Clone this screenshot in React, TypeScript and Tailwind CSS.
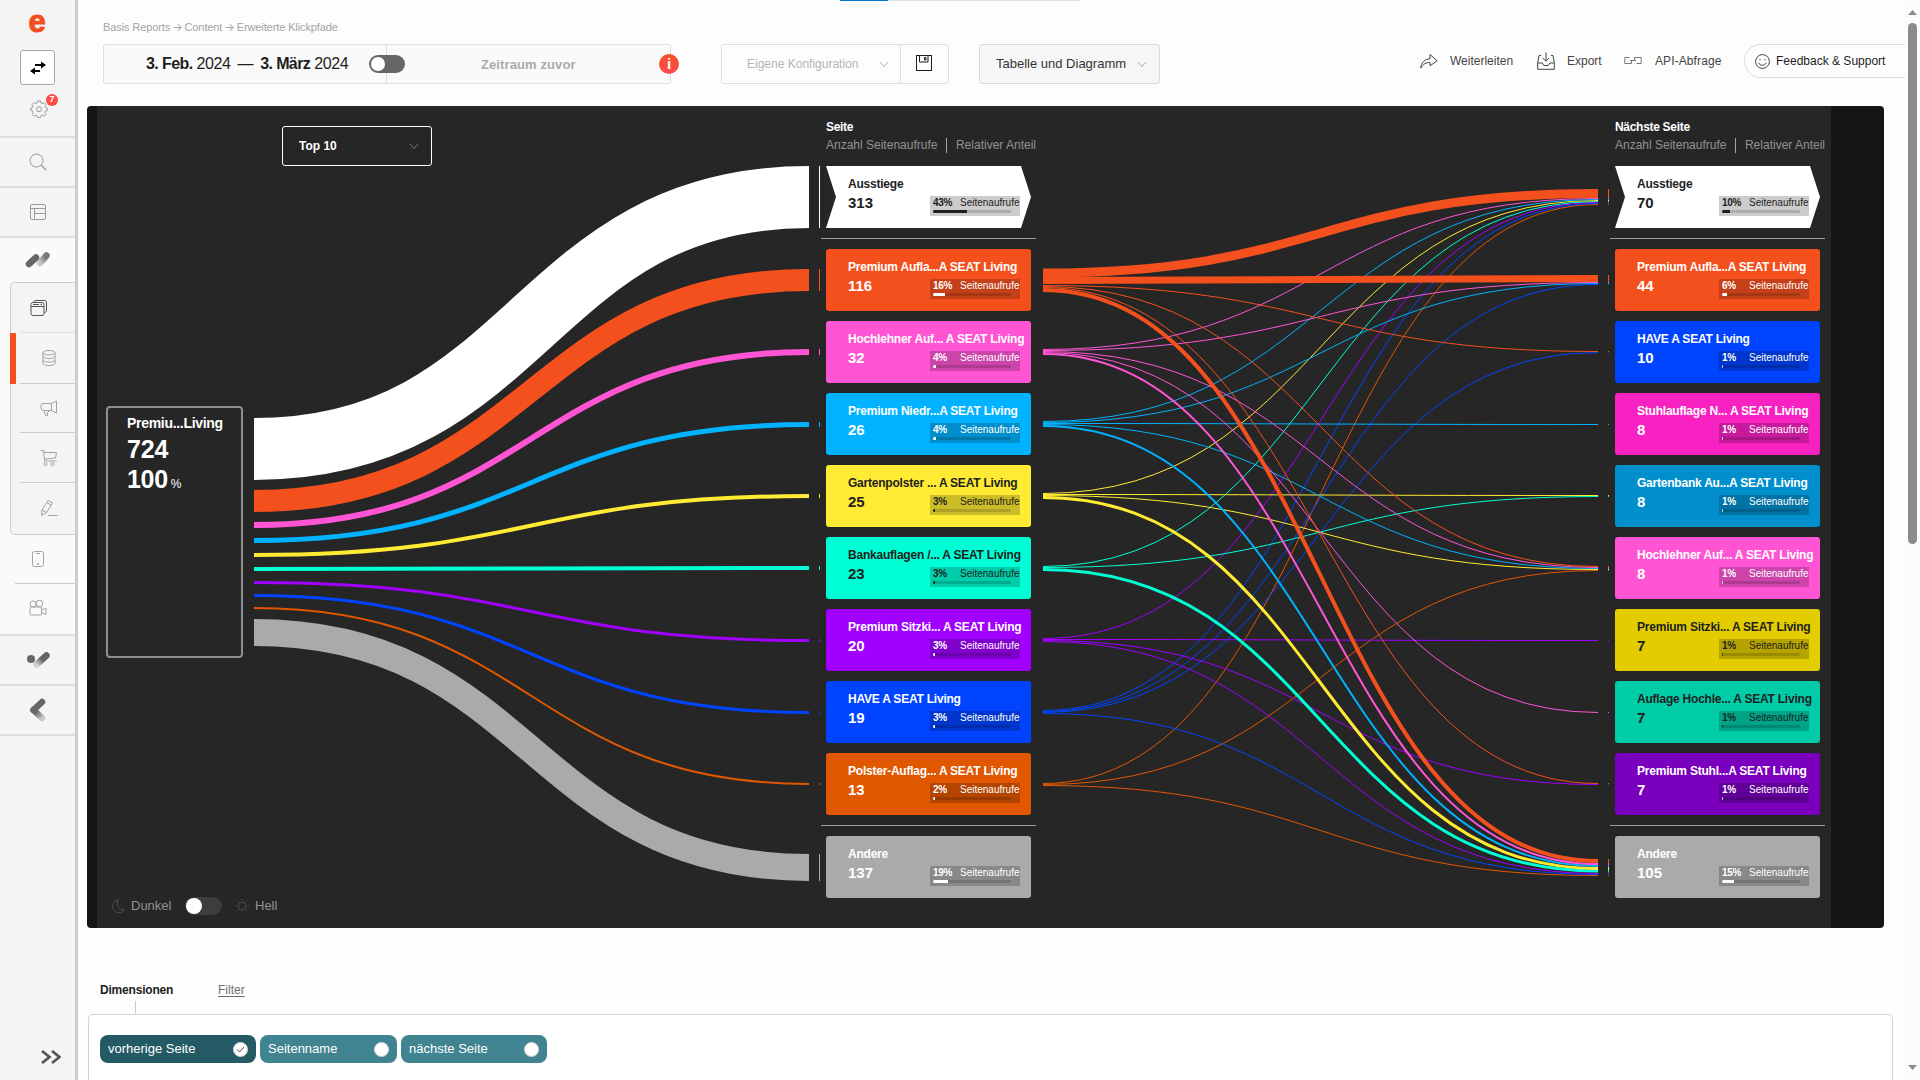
import { clsx } from "clsx";
import type { ReactNode } from "react";

type PageNode = {
    label: string;
    count: number;
    percent: number;
    card: string;
    darkText?: boolean;
};

type Link = {
    from: number;
    to: number;
    width: number;
    color: string;
};

const WHITE = "#ffffff";
const ORANGE = "#f4501e";
const PINK = "#ff55d5";
const SKY = "#00b2ff";
const YELLOW = "#ffeb33";
const MINT = "#00ffd4";
const PURPLE = "#a100ff";
const BLUE = "#0044ff";
const RUST = "#e05700";
const GRAY = "#aaaaaa";

const currentPages: PageNode[] = [
    { label: "Ausstiege", count: 313, percent: 43, card: "bg-white", darkText: true },
    { label: "Premium Aufla...A SEAT Living", count: 116, percent: 16, card: "bg-[#f4501e]" },
    { label: "Hochlehner Auf... A SEAT Living", count: 32, percent: 4, card: "bg-[#ff55d5]" },
    { label: "Premium Niedr...A SEAT Living", count: 26, percent: 4, card: "bg-[#00b2ff]" },
    { label: "Gartenpolster ... A SEAT Living", count: 25, percent: 3, card: "bg-[#ffeb33]", darkText: true },
    { label: "Bankauflagen /... A SEAT Living", count: 23, percent: 3, card: "bg-[#00ffd4]", darkText: true },
    { label: "Premium Sitzki... A SEAT Living", count: 20, percent: 3, card: "bg-[#a100ff]" },
    { label: "HAVE A SEAT Living", count: 19, percent: 3, card: "bg-[#0044ff]" },
    { label: "Polster-Auflag... A SEAT Living", count: 13, percent: 2, card: "bg-[#e05700]" },
    { label: "Andere", count: 137, percent: 19, card: "bg-[#aaaaaa]" },
];

const nextPages: PageNode[] = [
    { label: "Ausstiege", count: 70, percent: 10, card: "bg-white", darkText: true },
    { label: "Premium Aufla...A SEAT Living", count: 44, percent: 6, card: "bg-[#f4501e]" },
    { label: "HAVE A SEAT Living", count: 10, percent: 1, card: "bg-[#0044ff]" },
    { label: "Stuhlauflage N... A SEAT Living", count: 8, percent: 1, card: "bg-[#f822c3]" },
    { label: "Gartenbank Au...A SEAT Living", count: 8, percent: 1, card: "bg-[#008fcc]" },
    { label: "Hochlehner Auf... A SEAT Living", count: 8, percent: 1, card: "bg-[#ff55d5]" },
    { label: "Premium Sitzki... A SEAT Living", count: 7, percent: 1, card: "bg-[#e3cd00]", darkText: true },
    { label: "Auflage Hochle... A SEAT Living", count: 7, percent: 1, card: "bg-[#00cca8]", darkText: true },
    { label: "Premium Stuhl...A SEAT Living", count: 7, percent: 1, card: "bg-[#7a00bd]" },
    { label: "Andere", count: 105, percent: 15, card: "bg-[#aaaaaa]" },
];

// y centers of the flows at both ends
const firstLinks: Link[] = [
    { from: 449, to: 197, width: 62, color: WHITE },
    { from: 501, to: 280, width: 22, color: ORANGE },
    { from: 525, to: 352, width: 6, color: PINK },
    { from: 540.5, to: 424.5, width: 5, color: SKY },
    { from: 555, to: 496, width: 4, color: YELLOW },
    { from: 569, to: 568, width: 4, color: MINT },
    { from: 582.5, to: 640.5, width: 3, color: PURPLE },
    { from: 595.5, to: 712.5, width: 3, color: BLUE },
    { from: 608, to: 784, width: 2, color: RUST },
    { from: 632.5, to: 867.5, width: 27, color: GRAY },
];

const secondLinks: Link[] = [
    { from: 783.5, to: 204.5, width: 1, color: RUST },
    { from: 784.5, to: 570.5, width: 1, color: RUST },
    { from: 785.5, to: 875.5, width: 1, color: RUST },
    { from: 710.5, to: 203.5, width: 1, color: BLUE },
    { from: 711.5, to: 284.5, width: 1, color: BLUE },
    { from: 712.5, to: 352.5, width: 1, color: BLUE },
    { from: 713.5, to: 874.5, width: 1, color: BLUE },
    { from: 638.5, to: 202.5, width: 1, color: PURPLE },
    { from: 639.5, to: 640.5, width: 1, color: PURPLE },
    { from: 640.5, to: 784.5, width: 1, color: PURPLE },
    { from: 641.5, to: 873.5, width: 1, color: PURPLE },
    { from: 566.5, to: 201.5, width: 1, color: MINT },
    { from: 567.5, to: 496.5, width: 1, color: MINT },
    { from: 493.5, to: 200.5, width: 1, color: YELLOW },
    { from: 494.5, to: 495.5, width: 1, color: YELLOW },
    { from: 495.5, to: 569.5, width: 1, color: YELLOW },
    { from: 421.5, to: 199.5, width: 1, color: SKY },
    { from: 422.5, to: 283.5, width: 1, color: SKY },
    { from: 423.5, to: 424.5, width: 1, color: SKY },
    { from: 424.5, to: 568.5, width: 1, color: SKY },
    { from: 349.5, to: 198.5, width: 1, color: PINK },
    { from: 350.5, to: 282.5, width: 1, color: PINK },
    { from: 351.5, to: 567.5, width: 1, color: PINK },
    { from: 352.5, to: 712.5, width: 1, color: PINK },
    { from: 285.5, to: 351.5, width: 1, color: ORANGE },
    { from: 286.5, to: 566.5, width: 1, color: ORANGE },
    { from: 287.5, to: 783.5, width: 1, color: ORANGE },
    { from: 569.5, to: 871, width: 3, color: MINT },
    { from: 497.5, to: 868.5, width: 3, color: YELLOW },
    { from: 426, to: 866, width: 2, color: SKY },
    { from: 354, to: 864, width: 2, color: PINK },
    { from: 290, to: 861, width: 4, color: ORANGE },
    { from: 280.5, to: 278.5, width: 7, color: ORANGE },
    { from: 273, to: 193.5, width: 9, color: ORANGE },
];

const Flow = ({ links }: { links: Link[] }) => (
    <svg className="mr-px h-[822px] w-[566px] shrink-0" viewBox="0 106 566 822" fill="none">
        {links.map((link, index) => (
            <path
                key={index}
                d={`M0 ${link.from}C277.5 ${link.from} 277.5 ${link.to} 555 ${link.to}`}
                stroke={link.color}
                strokeWidth={link.width}
            />
        ))}
        {links.map((link, index) => (
            <rect key={index} x={565} y={link.to - link.width / 2} width={1} height={link.width} fill={link.color} />
        ))}
    </svg>
);

const PageCard = ({ page, exit }: { page: PageNode; exit?: boolean }) => (
    <div
        className={clsx(
            "mx-[5px] flex h-[62px] shrink-0 pl-[22px]",
            page.card,
            page.darkText ? "text-[#1e1e1e]" : "text-white",
            exit ? "[clip-path:polygon(0_0,195px_0,100%_50%,195px_100%,0_100%,10px_50%)]" : "rounded-[3px]"
        )}
    >
        <div className="w-[82px] pt-[10px] font-bold">
            <p className="text-xs leading-4 tracking-[-0.220px] whitespace-nowrap">{page.label}</p>
            <p className="mt-[3px] text-[15px] leading-4">{page.count}</p>
        </div>
        <div className="mt-[30px] h-5 w-[90px] bg-black/20 pl-[3px]">
            <div className="flex h-[14px] items-center text-[10px] leading-none whitespace-nowrap">
                <b className="w-[27px] tracking-[-0.3px]">{page.percent}%</b>
                <span>Seitenaufrufe</span>
            </div>
            <div className="h-[3px] w-[78px] overflow-hidden rounded-full bg-black/15">
                <div className="h-full bg-current" style={{ width: `${page.percent}%` }} />
            </div>
        </div>
    </div>
);

const PageColumn = ({ title, pages }: { title: string; pages: PageNode[] }) => (
    <div className="flex w-[215px] shrink-0 flex-col pt-[13px]">
        <div className="h-[47px] pl-[5px]">
            <p className="text-xs leading-4 font-bold tracking-[-0.3px] text-white">{title}</p>
            <p className="mt-[2px] flex items-center text-xs leading-4 whitespace-nowrap text-[#929292]">
                Anzahl Seitenaufrufe
                <span className="mr-[9px] ml-[9px] h-[15px] w-px bg-[#a5a5a5]" />
                Relativer Anteil
            </p>
        </div>
        <PageCard page={pages[0]} exit />
        <div className="my-[10px] h-px bg-[#9b9b9b]" />
        <div className="flex flex-col gap-[10px]">
            {pages.slice(1, -1).map((page) => (
                <PageCard key={page.label} page={page} />
            ))}
        </div>
        <div className="my-[10px] h-px bg-[#9b9b9b]" />
        <PageCard page={pages[pages.length - 1]} />
    </div>
);

const Icon = ({ children, size = 18, className }: { children: ReactNode; size?: number; className?: string }) => (
    <svg
        width={size}
        height={size}
        viewBox="0 0 18 18"
        fill="none"
        stroke="currentColor"
        strokeWidth="1"
        className={clsx("shrink-0", className)}
    >
        {children}
    </svg>
);

const ChevronSmall = ({ className }: { className?: string }) => (
    <svg width="10" height="7" viewBox="0 0 10 7" fill="none" stroke="currentColor" className={clsx("shrink-0", className)}>
        <path d="M1 1l4 4.5L9 1" />
    </svg>
);

const SubItem = ({ children, className }: { children: ReactNode; className?: string }) => (
    <div className={clsx("ml-[9px] flex h-[50px] items-center justify-center pl-[3px] text-[#a3a3a3]", className)}>{children}</div>
);

const Sidebar = () => (
    <aside className="flex h-[1080px] w-[78px] shrink-0 flex-col border-r-[3px] border-[#cccccc] bg-[#f4f4f4] text-[#9c9c9c]">
        <div className="flex h-[138px] flex-col items-center border-b-2 border-[#dddddd]">
            <span className="mt-[2px] h-[42px] pr-px text-[31px] leading-[40px] font-bold text-[#f4501e] [-webkit-text-stroke:1px_#f4501e]">e</span>
            <div className="mt-[6px] flex h-[35px] w-[35px] items-center justify-center rounded-[3px] border border-[#a8a8a8] bg-white">
                <svg width="18" height="14" viewBox="0 0 18 14" fill="none" stroke="#000000" strokeWidth="1.8">
                    <path d="M6 4h9M3 10h8" />
                    <path d="M12 0.500L17 4l-5 3.500zM6 6.500L1 10l5 3.500z" fill="#000000" stroke="none" />
                </svg>
            </div>
            <div className="relative mt-[15px] ml-[3px] h-[18px] w-[18px]">
                <Icon>
                    <path
                        d="M7.500 1h3l.4 2 1.300.6 1.800-1.100 2 2-1.100 1.800.6 1.300 1.800.4v2.500l-1.800.5-.6 1.400 1.100 1.800-2 2-1.800-1.100-1.300.6-.4 1.800h-3l-.4-1.800-1.300-.6-1.800 1.100-2-2 1.100-1.800L2.500 11 .700 10.500V8l1.800-.4.6-1.300L2 4.500l2-2 1.800 1.100L7.100 3z"
                        strokeLinejoin="round"
                    />
                    <circle cx="9" cy="9.200" r="2.500" />
                </Icon>
                <span className="absolute -top-[6px] left-[16px] flex h-3 w-3 items-center justify-center rounded-full bg-[#ff4b46] text-[9px] font-bold text-white">
                    7
                </span>
            </div>
        </div>
        <div className="flex h-[50px] items-center justify-center border-b-2 border-[#dddddd]">
            <Icon>
                <circle cx="7.500" cy="7.500" r="6.500" />
                <path d="M12.300 12.300l5 5" strokeWidth="1.400" />
            </Icon>
        </div>
        <div className="flex h-[50px] items-center justify-center border-b-2 border-[#dddddd]">
            <Icon>
                <rect x="1.500" y="1.500" width="15" height="15" rx="1.500" />
                <path d="M1.500 5.500h15M5.500 5.500v11M5.500 10.500h11" />
            </Icon>
        </div>
        <div className="h-[398px] border-b-2 border-[#dddddd] bg-[#fafafa]">
            <div className="flex h-11 items-center justify-center pb-[2px]">
                <svg width="25" height="17" viewBox="0 0 25 17" fill="none" strokeLinecap="round" strokeWidth="6.500">
                    <defs>
                        <linearGradient id="fadePill" x1="1" y1="0" x2="0" y2="1">
                            <stop offset="0.200" stopColor="#7a7a7a" />
                            <stop offset="1" stopColor="#cccccc" />
                        </linearGradient>
                    </defs>
                    <path d="M15 12l6.500-7.500" stroke="url(#fadePill)" />
                    <path d="M4 13l7-6.500" stroke="#666666" />
                </svg>
            </div>
            <div className="ml-[10px] h-[253px] rounded-l-[5px] border border-r-0 border-[#cccccc] bg-[#f4f4f4]">
                <div className="ml-[9px] flex h-[50px] items-center border-b border-dotted border-[#cccccc] pl-[10px] text-[#555555]">
                    <Icon>
                        <rect x="1" y="3.500" width="13" height="13" rx="2" />
                        <path d="M1 7.500h13M3 5.500h6M10.500 5.500h1.500M4 3.500c0-1.500.5-2 2-2h8c2 0 2.500.5 2.500 2.500v7c0 1.500-.5 2.500-2 2.500" />
                    </Icon>
                </div>
                <div className="flex">
                    <div className="-ml-px h-[51px] w-[6px] shrink-0 rounded-r-[1px] bg-[#f4501e]" />
                    <div className="ml-1 flex h-[51px] flex-1 items-center justify-center border-b border-[#cccccc] pl-[3px] text-[#a3a3a3]">
                        <Icon>
                            <ellipse cx="9" cy="3.700" rx="6" ry="2.200" />
                            <path d="M3 3.700v10.600c0 1.300 2.700 2.200 6 2.200s6-.9 6-2.200V3.700M3 7.300c0 1.300 2.700 2.200 6 2.200s6-.9 6-2.200M3 10.900c0 1.300 2.700 2.200 6 2.200s6-.9 6-2.200" />
                        </Icon>
                    </div>
                </div>
                <SubItem className="-mt-px border-b border-[#cccccc]">
                    <Icon>
                        <path d="M4 4.500h7.500v7H4A3.300 3.300 0 0 1 .700 8 3.300 3.300 0 0 1 4 4.500zM11.500 4.500l5-2.500v12l-5-2.500M4 11.500l1.500 5h2v-3l1-.5v-1.500" strokeLinejoin="round" />
                    </Icon>
                </SubItem>
                <SubItem className="border-b border-[#cccccc]">
                    <Icon>
                        <path d="M.5 1.500h3l1 10.500h12M4 3.500h12.500l-1 5.500-11 1" />
                        <circle cx="5.500" cy="15" r="1.600" />
                        <circle cx="12.500" cy="15" r="1.600" />
                    </Icon>
                </SubItem>
                <SubItem>
                    <Icon>
                        <path d="M8 1.500l4.500 2.500-6 9.500L1.500 16.500 2 11zM6.700 3.600l4.500 2.500M2 11l4.500 2.500M8 16.500h9.500" strokeLinejoin="round" />
                    </Icon>
                </SubItem>
            </div>
            <div className="-mt-px ml-[15px] flex h-[50px] items-center justify-center border-b border-[#cccccc] pr-[15px] text-[#a3a3a3]">
                <Icon>
                    <rect x="3.500" y="1.500" width="11" height="15" rx="2" />
                    <path d="M7 3.500h4" />
                    <circle cx="9" cy="14" r="0.700" />
                </Icon>
            </div>
            <div className="flex h-[47px] items-center justify-center text-[#a3a3a3]">
                <Icon>
                    <rect x="1" y="8" width="11.500" height="8" rx="1" />
                    <circle cx="4" cy="5" r="3" />
                    <circle cx="10.500" cy="4.500" r="3.300" />
                    <path d="M12.500 11.500l4.500-2.500v6.500l-4.500-2" />
                </Icon>
            </div>
        </div>
        <div className="flex h-[50px] items-center justify-center border-b-2 border-[#dddddd]">
            <svg width="24" height="18" viewBox="0 0 24 18" fill="none" strokeLinecap="round" strokeWidth="6.500">
                <circle cx="5" cy="8" r="4" fill="#666666" />
                <path d="M10.500 13.500l10-9" stroke="url(#fadeCheck)" />
                <defs>
                    <linearGradient id="fadeCheck" x1="1" y1="0" x2="0" y2="1">
                        <stop offset="0.450" stopColor="#666666" />
                        <stop offset="1" stopColor="#d2d2d2" />
                    </linearGradient>
                </defs>
            </svg>
        </div>
        <div className="flex h-[50px] items-center justify-center border-b-2 border-[#dddddd]">
            <svg width="17" height="24" viewBox="0 0 17 24" fill="none" strokeLinecap="round" strokeWidth="6.500">
                <defs>
                    <linearGradient id="fadeDown" x1="0" y1="0" x2="1" y2="1">
                        <stop offset="0.300" stopColor="#666666" />
                        <stop offset="1" stopColor="#c8c8c8" />
                    </linearGradient>
                </defs>
                <path d="M4.500 12l8.500 8" stroke="url(#fadeDown)" />
                <path d="M13 4L4.500 12" stroke="#666666" />
            </svg>
        </div>
        <div className="mt-auto flex justify-end pr-[14px] pb-[15px] text-[#555555]">
            <svg width="20" height="16" viewBox="0 0 20 16" fill="none" stroke="currentColor" strokeWidth="2.800">
                <path d="M1 2L8.500 8 1 14M11 2L18.500 8 11 14" />
            </svg>
        </div>
    </aside>
);

const Toolbar = () => (
    <div className="flex h-10 items-start">
        <div className="ml-[25px] flex h-10 w-[568px] shrink-0 items-center rounded-[3px] border border-[#dedede] bg-[#fafafa]">
            <div className="relative flex h-full w-[283px] shrink-0 items-center border-r border-[#dedede] pl-[42px] text-[16px] tracking-[-0.4px] whitespace-pre text-[#1e1e1e]">
                <b className="tracking-[-0.600px]">3. Feb.</b> 2024
                <span className="mx-[7px]">—</span>
                <b className="tracking-[-0.600px]">3. März</b> 2024
                <span className="absolute top-[10px] left-[265px] h-[18px] w-9 rounded-full bg-[#666666] p-[2px]">
                    <span className="block h-[14px] w-[14px] rounded-full bg-white" />
                </span>
            </div>
            <span className="ml-[94px] pt-px text-[13px] font-bold tracking-[0.100px] text-[#aaaaaa]">Zeitraum zuvor</span>
            <span className="-mr-[9px] ml-auto flex h-5 w-5 items-center justify-center rounded-full bg-linear-to-b from-[#f4501e] to-[#ff4b50] text-[15px] font-bold text-white">
                i
            </span>
        </div>
        <div className="ml-[50px] flex h-10 w-[228px] shrink-0 items-center rounded-[3px] border border-[#dedede] text-[#b4b4b4]">
            <span className="ml-[25px] text-xs whitespace-nowrap">Eigene Konfiguration</span>
            <ChevronSmall className="mr-[11px] ml-auto" />
            <div className="flex h-full w-12 shrink-0 items-center justify-center border-l border-[#dedede] pr-[2px] pb-[2px]">
                <Icon className="text-[#1e1e1e]">
                    <rect x="1.500" y="1.500" width="15" height="15" />
                    <path d="M4.500 1.500v6.500h8.500V1.500M9.500 3.500h1.500v2.500H9.500z" />
                </Icon>
            </div>
        </div>
        <div className="ml-[30px] flex h-10 w-[181px] shrink-0 items-center rounded-[3px] border border-[#d8d8d8] bg-[#f6f6f6] pr-3 pl-4 text-[13px] whitespace-nowrap text-[#333333]">
            Tabelle und Diagramm
            <ChevronSmall className="ml-auto text-[#aaaaaa]" />
        </div>
        <div className="ml-auto flex h-[34px] items-center text-xs whitespace-nowrap text-[#444444]">
            <Icon>
                <path d="M.8 16c.2-5 3.700-9 9.200-9.200V2.500l7.200 6.300-7.200 5v-3.300C6 10.500 3 12 .8 16z" strokeLinejoin="round" />
            </Icon>
            <span className="ml-3 w-[87px]">Weiterleiten</span>
            <Icon>
                <path d="M4 3.500H2L.7 11v6.300h16.600V11L16 3.500h-2M.7 11h4.500l1.500 2.500h4.600l1.500-2.500h4.500M9 .5v8.500M5.800 6L9 9.200 12.200 6" />
            </Icon>
            <span className="ml-3 w-[57px]">Export</span>
            <Icon className="text-[#777777]">
                <path d="M5.500 5.500H.8v6h6.700V9M12.500 11.500h4.700v-6h-6.700V8M6 8.500h6" />
            </Icon>
            <span className="ml-[13px] w-[89px] tracking-[0.100px]">API-Abfrage</span>
            <div className="flex h-[34px] w-[161px] items-center rounded-l-full border border-r-0 border-[#dddddd] pl-[10px] text-[#1e1e1e]">
                <Icon size={15}>
                    <circle cx="9" cy="9" r="8.300" />
                    <path d="M4.500 10.500c1.500 4 7.500 4 9 0M6 6v1.500M12 6v1.500" />
                </Icon>
                <span className="ml-[6px]">Feedback &amp; Support</span>
            </div>
        </div>
    </div>
);

const StartColumn = () => (
    <div className="flex w-[157px] shrink-0 flex-col pl-[9px]">
        <div className="mt-[300px] h-[252px] w-[137px] shrink-0 rounded-[4px] border-2 border-[#8f8f8f] pt-[7px] pl-[19px] font-bold text-white">
            <p className="text-[14px] leading-4 tracking-[-0.300px]">Premiu...Living</p>
            <p className="mt-[5px] text-[25px] leading-[26px] tracking-[-0.200px]">724</p>
            <p className="mt-1 text-[25px] leading-[26px] tracking-[-0.300px]">
                100<span className="ml-[3px] text-xs font-normal">%</span>
            </p>
        </div>
        <div className="mt-auto mb-[13px] flex h-[18px] items-center pl-[6px] text-[13px] whitespace-nowrap text-[#929292]">
            <Icon size={14} className="text-[#5c5c5c]">
                <path d="M8 1C3 2 .8 6 .8 9.500c0 4.500 3.500 8 8 8 3.500 0 6-1.500 7.200-4-6 1.500-12-5-8-12.500z" />
            </Icon>
            <span className="ml-[5px] w-[54px] shrink-0">Dunkel</span>
            <span className="block h-[18px] w-[37px] shrink-0 rounded-full bg-[#3d3d3d] p-px">
                <span className="block h-4 w-4 rounded-full bg-white" />
            </span>
            <Icon size={14} className="ml-[13px] text-[#5c5c5c]">
                <circle cx="9" cy="9" r="4.800" />
                <path d="M9 0v2.500M9 15.500V18M0 9h2.500M15.500 9H18M2.600 2.600l1.800 1.800M13.600 13.600l1.800 1.800M2.600 15.400l1.800-1.800M13.600 4.400l1.800-1.800" />
            </Icon>
            <span className="ml-[6px]">Hell</span>
        </div>
    </div>
);

const FlowPanel = () => (
    <section className="ml-[9px] h-[822px] w-[1797px] rounded-[4px] bg-[#151515] pl-[10px]">
        <div className="relative flex h-full w-[1734px] bg-[#262626]">
            <StartColumn />
            <Flow links={firstLinks} />
            <PageColumn title="Seite" pages={currentPages} />
            <div className="ml-[7px] flex">
                <Flow links={secondLinks} />
                <PageColumn title="Nächste Seite" pages={nextPages} />
            </div>
            {/* select floats over the first flow */}
            <div className="absolute top-5 left-[185px] flex h-10 w-[150px] items-center justify-between rounded-[3px] border border-white bg-[#262626] pr-3 pl-4 text-xs font-bold text-white">
                Top 10
                <ChevronSmall className="text-[#777777]" />
            </div>
        </div>
    </section>
);

const Tag = ({ label, active, className }: { label: string; active?: boolean; className: string }) => (
    <div className={clsx("flex h-7 items-center justify-between rounded-lg pr-2 pl-2 text-[13px] text-white", className)}>
        {label}
        <span className="flex h-[15px] w-[15px] items-center justify-center rounded-full border border-[#d5d5d5] bg-white text-[#444444]">
            {active && (
                <svg width="9" height="7" viewBox="0 0 9 7" fill="none" stroke="currentColor">
                    <path d="M1 3.500L3.500 6 8 1" />
                </svg>
            )}
        </span>
    </div>
);

const Dimensions = () => (
    <section>
        <div className="flex pt-[54px] pl-[22px] text-xs leading-4">
            <b className="w-[118px] tracking-[-0.200px] text-[#1e1e1e]">Dimensionen</b>
            <span className="text-[#6e6e6e] underline underline-offset-2">Filter</span>
        </div>
        <div className="mt-[3px] ml-[57px] h-[13px] w-px bg-[#cccccc]" />
        <div className="ml-[10px] flex h-[66px] w-[1805px] gap-1 rounded-t-[5px] border border-b-0 border-[#d2d2d2] bg-white pt-5 pl-[11px]">
            <Tag label="vorherige Seite" active className="w-[156px] bg-[#245a66]" />
            <Tag label="Seitenname" className="w-[137px] bg-[#408391]" />
            <Tag label="nächste Seite" className="w-[146px] bg-[#408391]" />
        </div>
    </section>
);

const Scrollbar = () => (
    <div className="flex h-[1080px] w-[15px] shrink-0 flex-col items-center bg-[#fcfcfc]">
        <svg width="9" height="5" viewBox="0 0 9 5" className="mt-[10px] shrink-0">
            <path d="M4.500 0L9 5H0z" fill="#8b8b8b" />
        </svg>
        <div className="mt-2 h-[521px] w-[9px] rounded-full bg-[#8b8b8b]" />
        <svg width="9" height="5" viewBox="0 0 9 5" className="mt-auto mb-[10px] shrink-0">
            <path d="M4.500 5L9 0H0z" fill="#8b8b8b" />
        </svg>
    </div>
);

const Arrow = () => <span className="-mx-px font-[Inter]">→</span>;

export default function App() {
    return (
        <div className="flex h-[1080px] w-[1920px] overflow-hidden bg-[#fdfdfd] font-['Liberation_Sans',Arial,sans-serif]">
            <Sidebar />
            <main className="flex w-[1827px] shrink-0 flex-col">
                <div className="ml-[762px] flex h-px w-[241px] bg-[#e3e3e3]">
                    <div className="h-px w-12 bg-[#0078d4]" />
                </div>
                <p className="mt-[18px] ml-[25px] h-[25px] text-[11px] leading-4 tracking-[-0.100px] text-[#a3a3a3]">
                    Basis Reports <Arrow /> Content <Arrow /> Erweiterte Klickpfade
                </p>
                <Toolbar />
                <div className="h-[22px] shrink-0" />
                <FlowPanel />
                <Dimensions />
            </main>
            <Scrollbar />
        </div>
    );
}
